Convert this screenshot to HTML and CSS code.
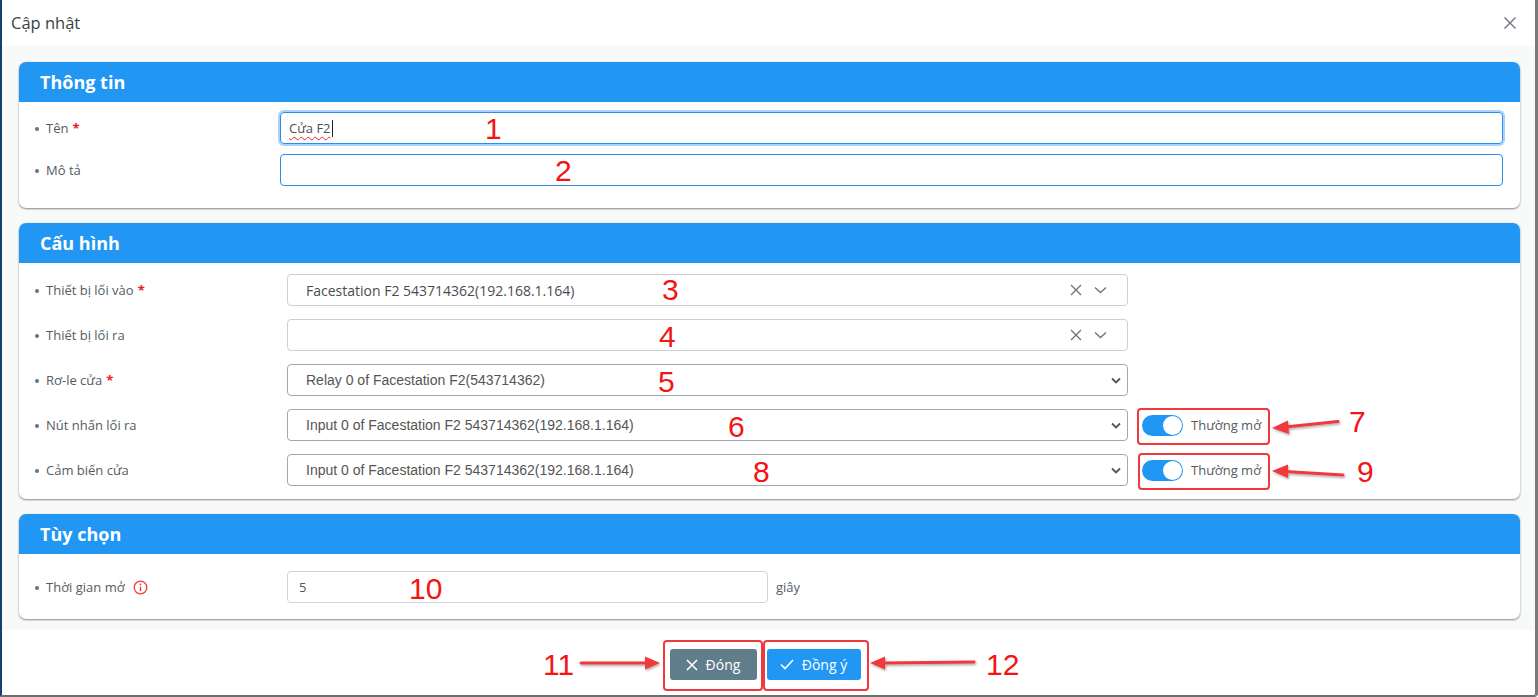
FILE: index.html
```html
<!DOCTYPE html>
<html lang="vi">
<head>
<meta charset="utf-8">
<title>Cập nhật</title>
<link rel="stylesheet" href="styles.css">
</head>
<body>
<div class="dialog">
  <div class="dlg-head">
    <span class="dlg-title">Cập nhật</span>
    <svg class="dlg-close" width="14" height="14" viewBox="0 0 14 14"><path d="M1.5 1.5L12.5 12.5M12.5 1.5L1.5 12.5" stroke="#6c757d" stroke-width="1.4" fill="none"/></svg>
  </div>
  <div class="dlg-body">
    <section class="card">
      <div class="card-head">Thông tin</div>
      <div class="card-body info">
        <div class="row">
          <div class="label">Tên <span class="req">*</span></div>
          <div class="field"><div class="input focus"><span class="typed">Cửa F2</span><span class="caret"></span></div></div>
        </div>
        <div class="row">
          <div class="label">Mô tả</div>
          <div class="field"><div class="input blue"></div></div>
        </div>
      </div>
    </section>

    <section class="card">
      <div class="card-head">Cấu hình</div>
      <div class="card-body conf">
        <div class="row">
          <div class="label">Thiết bị lối vào <span class="req">*</span></div>
          <div class="field">
            <div class="sel ng"><span class="val">Facestation F2 543714362(192.168.1.164)</span>
              <svg class="clr" width="12" height="12" viewBox="0 0 12 12"><path d="M1 1L11 11M11 1L1 11" stroke="#6c757d" stroke-width="1.3"/></svg>
              <svg class="chev" width="13" height="8" viewBox="0 0 13 8"><path d="M1 1.5L6.5 6.5L12 1.5" stroke="#6c757d" stroke-width="1.4" fill="none"/></svg>
            </div>
          </div>
        </div>
        <div class="row">
          <div class="label">Thiết bị lối ra</div>
          <div class="field">
            <div class="sel ng"><span class="val"></span>
              <svg class="clr" width="12" height="12" viewBox="0 0 12 12"><path d="M1 1L11 11M11 1L1 11" stroke="#6c757d" stroke-width="1.3"/></svg>
              <svg class="chev" width="13" height="8" viewBox="0 0 13 8"><path d="M1 1.5L6.5 6.5L12 1.5" stroke="#6c757d" stroke-width="1.4" fill="none"/></svg>
            </div>
          </div>
        </div>
        <div class="row">
          <div class="label">Rơ-le cửa <span class="req">*</span></div>
          <div class="field">
            <div class="sel native"><span class="val">Relay 0 of Facestation F2(543714362)</span>
              <svg class="nchev" width="10" height="7" viewBox="0 0 10 7"><path d="M1 1.5L5 5.5L9 1.5" stroke="#555" stroke-width="1.8" fill="none"/></svg>
            </div>
          </div>
        </div>
        <div class="row">
          <div class="label">Nút nhấn lối ra</div>
          <div class="field">
            <div class="sel native"><span class="val">Input 0 of Facestation F2 543714362(192.168.1.164)</span>
              <svg class="nchev" width="10" height="7" viewBox="0 0 10 7"><path d="M1 1.5L5 5.5L9 1.5" stroke="#555" stroke-width="1.8" fill="none"/></svg>
            </div>
          </div>
          <div class="toggle"><span class="sw"><span class="knob"></span></span><span class="tlabel">Thường mở</span></div>
        </div>
        <div class="row">
          <div class="label">Cảm biến cửa</div>
          <div class="field">
            <div class="sel native"><span class="val">Input 0 of Facestation F2 543714362(192.168.1.164)</span>
              <svg class="nchev" width="10" height="7" viewBox="0 0 10 7"><path d="M1 1.5L5 5.5L9 1.5" stroke="#555" stroke-width="1.8" fill="none"/></svg>
            </div>
          </div>
          <div class="toggle"><span class="sw"><span class="knob"></span></span><span class="tlabel">Thường mở</span></div>
        </div>
      </div>
    </section>

    <section class="card">
      <div class="card-head">Tùy chọn</div>
      <div class="card-body opt">
        <div class="row">
          <div class="label">Thời gian mở
            <svg class="info-ic" width="15" height="15" viewBox="0 0 15 15"><circle cx="7.5" cy="7.5" r="6.3" stroke="#f23b3b" stroke-width="1.3" fill="none"/><circle cx="7.5" cy="4.4" r="0.9" fill="#f23b3b"/><path d="M7.5 6.4V11" stroke="#f23b3b" stroke-width="1.4"/></svg>
          </div>
          <div class="field short"><div class="input gray"><span class="val">5</span></div></div>
          <span class="unit">giây</span>
        </div>
      </div>
    </section>
  </div>
  <div class="dlg-foot">
    <button class="btn btn-close"><svg width="12" height="12" viewBox="0 0 12 12"><path d="M1 1L11 11M11 1L1 11" stroke="#fff" stroke-width="1.6"/></svg>Đóng</button>
    <button class="btn btn-ok"><svg width="14" height="11" viewBox="0 0 14 11"><path d="M1 5.5L5 9.5L13 1" stroke="#fff" stroke-width="1.6" fill="none"/></svg>Đồng ý</button>
  </div>
</div>

<!-- annotations overlay -->
<div class="anno">
  <span class="num n1">1</span>
  <span class="num n2">2</span>
  <span class="num n3">3</span>
  <span class="num n4">4</span>
  <span class="num n5">5</span>
  <span class="num n6">6</span>
  <span class="num n7">7</span>
  <span class="num n8">8</span>
  <span class="num n9">9</span>
  <span class="num n10">10</span>
  <span class="num n11">11</span>
  <span class="num n12">12</span>
  <span class="box b7"></span>
  <span class="box b9"></span>
  <span class="box b11"></span>
  <span class="box b12"></span>
  <svg class="arrows" width="1538" height="697" viewBox="0 0 1538 697">
    <defs>
      <filter id="sh" x="-20%" y="-50%" width="140%" height="200%"><feDropShadow dx="1" dy="1.5" stdDeviation="1.2" flood-color="#000" flood-opacity="0.35"/></filter>
    </defs>
    <g fill="#f0393d" stroke="#f0393d" filter="url(#sh)">
      <line x1="1338" y1="421.5" x2="1285" y2="427" stroke-width="3" stroke-linecap="round"/>
      <polygon points="1272,428 1288,420.5 1289,434" stroke="none"/>
      <line x1="1343" y1="475" x2="1285" y2="471.5" stroke-width="3" stroke-linecap="round"/>
      <polygon points="1272,471 1288,464.5 1288,478" stroke="none"/>
      <line x1="581" y1="663" x2="647" y2="663" stroke-width="3" stroke-linecap="round"/>
      <polygon points="660,663 645,656.5 645,669.5" stroke="none"/>
      <line x1="974" y1="662" x2="884" y2="663" stroke-width="3" stroke-linecap="round"/>
      <polygon points="870,663 885,656.5 885,669.5" stroke="none"/>
    </g>
  </svg>
</div>
</body>
</html>
```

FILE: styles.css
```css
* { box-sizing: border-box; }
html, body { margin: 0; padding: 0; }
body {
  width: 1538px;
  height: 697px;
  overflow: hidden;
  background: #ffffff;
  position: relative;
  font-family: "Open Sans", "Noto Sans", sans-serif;
  color: #495057;
}
.dialog {
  width: 1538px;
  height: 697px;
  background: #fff;
  border-left: 2px solid #173f6d;
  border-right: 3px solid #7a7a7a;
  border-bottom: 2px solid #6e6e6e;
  border-bottom-right-radius: 4px;
  display: flex;
  flex-direction: column;
}
.dlg-head {
  height: 46px;
  flex: none;
  display: flex;
  align-items: center;
  justify-content: space-between;
  padding: 0 18px 0 9px;
}
.dlg-title {
  font-size: 16.5px;
  color: #3a3f44;
  margin-top: -1px;
}
.dlg-close { margin-top: -1px; }
.dlg-body {
  background: #f8f9f9;
  padding: 16px 15px 10px 17px;
  display: flex;
  flex-direction: column;
  gap: 15px;
  height: 584px;
  flex: none;
}
.card {
  background: #fff;
  border-radius: 7px;
  box-shadow: 0 1px 2px rgba(0,0,0,0.45), 0 0 2px rgba(0,0,0,0.06);
  overflow: hidden;
}
.card-head {
  height: 40px;
  background: #2196f3;
  color: #fff;
  font-weight: 700;
  font-size: 18px;
  line-height: 40px;
  padding-left: 21px;
}
.card-body { display: flex; flex-direction: column; }
.card-body.info { padding: 10px 17px 22px 0; gap: 10px; }
.card-body.conf { padding: 11px 0 13px 0; gap: 13px; }
.card-body.opt { padding: 17px 0 16px 0; }
.row {
  display: flex;
  align-items: center;
  height: 32px;
}
.label {
  font-size: 13px;
  color: #555b61;
  padding-left: 27px;
  position: relative;
  flex: none;
  display: flex;
  align-items: center;
  gap: 4px;
}
.label::before {
  content: "";
  position: absolute;
  left: 16px;
  top: 50%;
  width: 4px;
  height: 4px;
  margin-top: -1px;
  border-radius: 50%;
  background: #6c7176;
}
.info .label { width: 261px; }
.conf .label, .opt .label { width: 268px; }
.req { color: #f01919; font-weight: 700; }
.info-ic { margin-left: 4px; margin-top: 1px; }
.field { flex: 1; }
.conf .field { flex: none; width: 841px; }
.field.short { flex: none; width: 481px; }
.input {
  height: 32px;
  border: 1px solid #ced4da;
  border-radius: 4px;
  display: flex;
  align-items: center;
  padding-left: 10px;
  font-size: 13px;
}
.input.focus {
  border: 1px solid #2a8df0;
  box-shadow: 0 0 0 2px #a9d3f8;
  padding-left: 8px;
}
.input.blue { border-color: #2f8de4; }
.input.gray { border-color: #cfd3da; padding-left: 11px; }
.typed {
  color: #4a4f55;
  text-decoration: underline wavy #e3242b;
  text-decoration-thickness: 1px;
  text-underline-offset: 3px;
}
.caret { display: inline-block; width: 1px; height: 17px; background: #222; margin-left: 1px; }
.val { color: #555; }
.sel {
  height: 32px;
  border-radius: 4px;
  display: flex;
  align-items: center;
  position: relative;
}
.sel.ng {
  border: 1px solid #ccd0d6;
  padding-left: 18px;
  font-family: "Open Sans", "Noto Sans", sans-serif;
  font-size: 14px;
}
.sel.ng .val { flex: 1; color: #484d52; }
.sel.ng .clr { margin-right: 12px; }
.sel.ng .chev { margin-right: 20px; }
.sel.native {
  border: 1px solid #a7a7a7;
  padding-left: 18px;
  font-family: "Liberation Sans", Arial, sans-serif;
  font-size: 14px;
}
.sel.native .val { flex: 1; color: #555; }
.sel.native .nchev { margin-right: 6px; }
.toggle {
  margin-left: 14px;
  display: flex;
  align-items: center;
  gap: 8px;
}
.sw {
  width: 41px;
  height: 21px;
  border-radius: 11px;
  background: #2196f3;
  position: relative;
  display: block;
}
.knob {
  position: absolute;
  right: 1px;
  top: 1px;
  width: 19px;
  height: 19px;
  border-radius: 50%;
  background: #fff;
}
.tlabel { font-size: 13px; color: #555b61; }
.unit { font-size: 13px; color: #555b61; margin-left: 8px; }
.dlg-foot {
  flex: 1;
  display: flex;
  justify-content: center;
  align-items: flex-start;
  gap: 10px;
  padding-top: 19px;
  padding-right: 7px;
}
.btn {
  height: 31px;
  border: none;
  border-radius: 3px;
  color: #fff;
  font-family: "Open Sans", "Noto Sans", sans-serif;
  font-size: 14px;
  display: flex;
  align-items: center;
  justify-content: center;
  gap: 8px;
  padding: 0;
}
.btn-close { background: #607d8b; width: 87px; }
.btn-ok { background: #2196f3; width: 94px; }

/* annotations */
.anno {
  position: absolute;
  left: 0; top: 0;
  width: 1538px; height: 697px;
  pointer-events: none;
}
.arrows { position: absolute; left: 0; top: 0; }
.num {
  position: absolute;
  font-family: "Liberation Sans", Arial, sans-serif;
  font-size: 30px;
  line-height: 30px;
  color: #f41414;
}
.n1 { left: 485px; top: 114px; }
.n2 { left: 555px; top: 156px; }
.n3 { left: 662px; top: 275px; }
.n4 { left: 659px; top: 322px; }
.n5 { left: 658px; top: 367px; }
.n6 { left: 728px; top: 412px; }
.n7 { left: 1349px; top: 407px; }
.n8 { left: 753px; top: 457px; }
.n9 { left: 1357px; top: 457px; }
.n10 { left: 409px; top: 574px; }
.n11 { left: 543px; top: 650px; }
.n12 { left: 986px; top: 650px; }
.box {
  position: absolute;
  border: 2px solid #f0393d;
  border-radius: 4px;
}
.b7 { left: 1137px; top: 408px; width: 133px; height: 37px; }
.b9 { left: 1138px; top: 453px; width: 132px; height: 37px; }
.b11 { left: 663px; top: 640px; width: 100px; height: 51px; }
.b12 { left: 763px; top: 640px; width: 106px; height: 51px; }
```
